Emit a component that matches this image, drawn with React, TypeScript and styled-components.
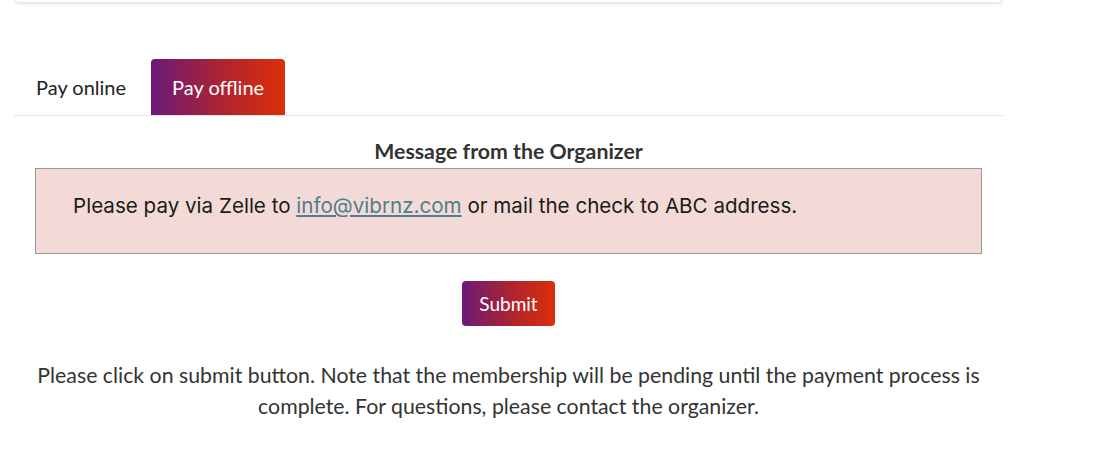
import React from "react";
import styled, { createGlobalStyle } from "styled-components";

const Global = createGlobalStyle`
  html, body { margin: 0; padding: 0; background: #fff; }
  body { font-family: Lato, "Liberation Sans", sans-serif; color: #222; }
`;

const Page = styled.div`
  width: 989px;
  margin-left: 14px;
`;

const TopCard = styled.div`
  height: 4px;
  margin-top: -2px;
  border: 1px solid #e6e6e6;
  border-top: none;
  border-radius: 0 0 6px 6px;
  box-shadow: 0 1px 3px rgba(0, 0, 0, 0.12);
`;

const Tabs = styled.div`
  display: flex;
  align-items: flex-end;
  margin-top: 56px;
  border-bottom: 1px solid #e3e3e3;
  height: 56px;
`;

const Tab = styled.div<{ $active?: boolean }>`
  height: 56px;
  display: flex;
  align-items: center;
  padding: ${(p) => (p.$active ? "0 21px" : "0 25px 0 22px")};
  font-size: 20px;
  color: ${(p) => (p.$active ? "#fff" : "#222")};
  border-radius: 4px 4px 0 0;
  background: ${(p) =>
    p.$active ? "linear-gradient(90deg, #6a1a78 0%, #b0242e 55%, #dc2f0a 100%)" : "transparent"};
`;

const Heading = styled.h3`
  margin: 23px 0 0;
  text-align: center;
  font-size: 21.3px;
  font-weight: 700;
  color: #333;
  line-height: 24px;
`;

const MessageBox = styled.div`
  margin: 5px 21px 0;
  height: 86px;
  box-sizing: border-box;
  border: 1px solid #999;
  background: #f4dad6;
  padding: 24px 0 0 37px;
  font-family: Inter, "Open Sans", sans-serif;
  font-size: 20.6px;
  color: #1a1a1a;
`;

const Link = styled.a`
  color: #4d7f8e;
  text-decoration: underline;
`;

const ButtonRow = styled.div`
  display: flex;
  justify-content: center;
  margin-top: 27px;
`;

const SubmitButton = styled.button`
  width: 93px;
  height: 45px;
  border: none;
  border-radius: 4px;
  background: linear-gradient(90deg, #6a1a78 0%, #b0242e 55%, #dc2f0a 100%);
  color: #fff;
  font-family: Lato, "Liberation Sans", sans-serif;
  font-size: 19px;
  cursor: pointer;
`;

const Note = styled.p`
  margin: 34px 0 0;
  text-align: center;
  font-size: 21.3px;
  line-height: 31px;
  color: #333;
`;

export default function App() {
  return (
    <>
      <Global />
      <Page>
        <TopCard />
        <Tabs>
          <Tab>Pay online</Tab>
          <Tab $active>Pay offline</Tab>
        </Tabs>
        <Heading>Message from the Organizer</Heading>
        <MessageBox>
          Please pay via Zelle to <Link href="#">info@vibrnz.com</Link> or mail the check to ABC address.
        </MessageBox>
        <ButtonRow>
          <SubmitButton>Submit</SubmitButton>
        </ButtonRow>
        <Note>
          Please click on submit button. Note that the membership will be pending until the payment process is
          complete. For questions, please contact the organizer.
        </Note>
      </Page>
    </>
  );
}
